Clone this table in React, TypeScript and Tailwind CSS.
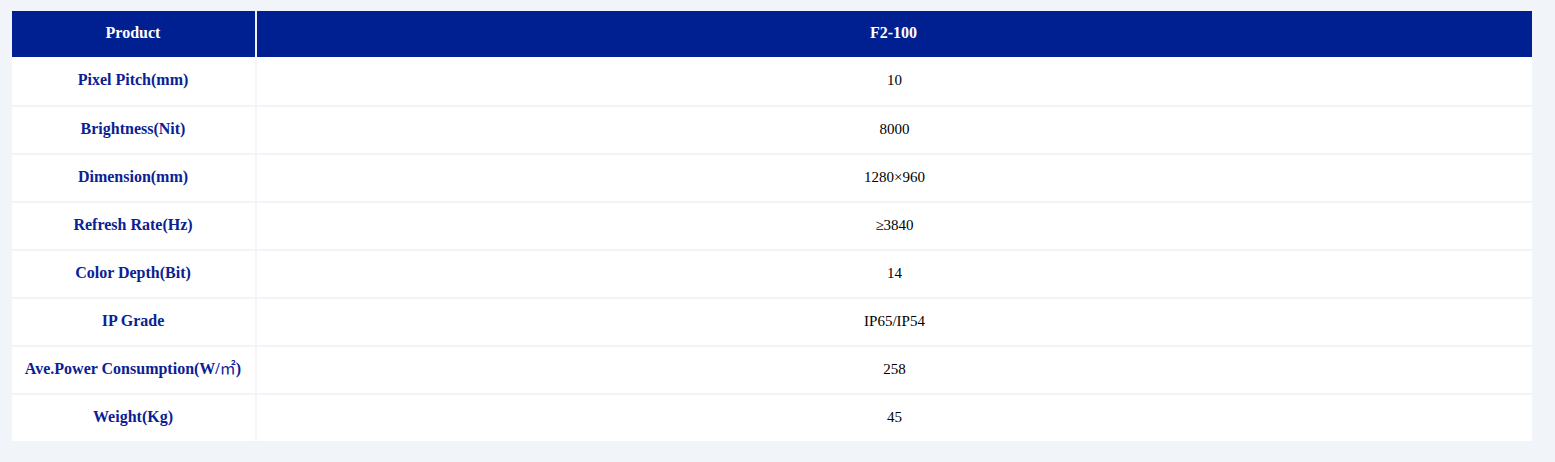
import React from "react";

const rows: [React.ReactNode, string][] = [
  ["Pixel Pitch(mm)", "10"],
  ["Brightness(Nit)", "8000"],
  ["Dimension(mm)", "1280×960"],
  ["Refresh Rate(Hz)", "≥3840"],
  ["Color Depth(Bit)", "14"],
  ["IP Grade", "IP65/IP54"],
  [
    <>
      Ave.Power Consumption(W/<span className="font-normal">㎡</span>)
    </>,
    "258",
  ],
  ["Weight(Kg)", "45"],
];

export default function App() {
  return (
    <div
      className="min-h-screen w-full bg-[#f1f4f9] pt-[11px] pl-[12px] pr-[23px] pb-[21px]"
      style={{ fontFamily: '"Liberation Serif", "Noto Sans CJK SC", serif' }}
    >
      <div className="flex flex-col w-[1520px]">
        <div className="flex h-[46px] bg-[#001f91] text-white font-bold text-[16px]">
          <div className="w-[243px] flex items-center justify-center pb-[2px] pr-[1px]">Product</div>
          <div className="flex-1 flex items-center justify-center border-l-2 border-[#eef2f8] pb-[2px] pr-[2px]">
            F2-100
          </div>
        </div>
        {rows.map(([label, value], i) => (
          <div
            key={i}
            className={
              i === 0
                ? "flex h-[48px] bg-white"
                : "flex h-[48px] bg-white border-t-2 border-[#f1f4f9]"
            }
          >
            <div className="w-[243px] flex items-center justify-center font-bold text-[16px] text-[#0b2193] pb-[2px] pr-[1px]">
              {label}
            </div>
            <div className="flex-1 flex items-center justify-center border-l-2 border-[#f4f6fa] text-[15px] text-black pb-[2px]">
              {value}
            </div>
          </div>
        ))}
      </div>
    </div>
  );
}
